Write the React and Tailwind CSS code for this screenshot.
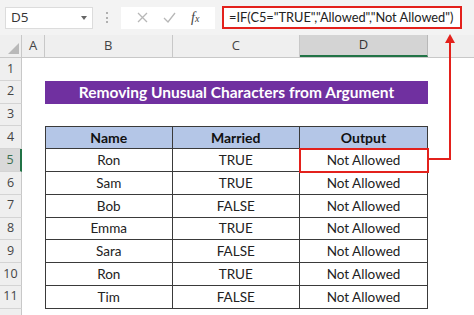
import React from 'react';

const rows = [
  ['Ron', 'TRUE'],
  ['Sam', 'TRUE'],
  ['Bob', 'FALSE'],
  ['Emma', 'TRUE'],
  ['Sara', 'FALSE'],
  ['Ron', 'TRUE'],
  ['Tim', 'FALSE'],
];

const cal = { fontFamily: 'Lato, "Open Sans", sans-serif' };

function RowHead({ n, active }) {
  return (
    <div
      className={`w-[22px] shrink-0 flex items-center justify-center text-[12.5px] border-b border-[#d4d4d4] ${
        active ? 'bg-[#d9d9d9] text-[#3a6e4f] border-r-2 border-r-[#217346]' : 'bg-[#efefef] text-[#444] border-r border-r-[#c8c8c8]'
      }`}
    >
      {n <= 11 ? n : ''}
    </div>
  );
}

function Cell({ children, className = '' }) {
  return (
    <div className={`flex items-center justify-center border-r border-b border-[#3a3a3a] ${className}`}>
      {children}
    </div>
  );
}

export default function App() {
  return (
    <div className="relative w-[474px] h-[315px] overflow-hidden bg-white" style={{ fontFamily: '"Open Sans", sans-serif' }}>
      {/* formula bar */}
      <div className="h-[35px] bg-[#f3f3f3] flex items-center pl-[5px]">
        <div className="w-[88px] h-[22px] bg-white border border-[#dcdcdc] flex items-center justify-between pl-[5px] pr-[5px] text-[13.5px] text-[#333]">
          <span>D5</span>
          <span className="w-0 h-0 border-l-[3.5px] border-r-[3.5px] border-t-[4px] border-l-transparent border-r-transparent border-t-[#666]" />
        </div>
        <div className="w-[28px] flex flex-col items-center gap-[2.5px]">
          <span className="w-[2px] h-[2px] bg-[#b0b0b0]" />
          <span className="w-[2px] h-[2px] bg-[#b0b0b0]" />
          <span className="w-[2px] h-[2px] bg-[#b0b0b0]" />
        </div>
        <div className="w-[94px] h-[22px] bg-white flex items-center justify-around px-[8px]">
          <svg width="11" height="11" viewBox="0 0 11 11"><path d="M1 1L10 10M10 1L1 10" stroke="#b7b7b7" strokeWidth="1.3" /></svg>
          <svg width="13" height="11" viewBox="0 0 13 11"><path d="M1 6L5 10L12 1" stroke="#b7b7b7" strokeWidth="1.3" fill="none" /></svg>
          <span className="text-[14px] italic text-[#444]" style={{ fontFamily: '"Liberation Serif", serif' }}>f<span className="text-[10px]">x</span></span>
        </div>
        <div className="ml-[7px] w-[240px] h-[23px] bg-white border-2 border-[#e3211c] flex items-center pl-[5px] text-[12.8px] text-[#222] whitespace-nowrap" style={cal}>
          =IF(C5="TRUE","Allowed","Not Allowed")
        </div>
      </div>

      {/* column headers */}
      <div className="h-[23px] flex bg-[#efefef] border-b border-[#c8c8c8] text-[13px] text-[#444]">
        <div className="w-[22px] shrink-0 border-r border-[#c8c8c8] flex items-end justify-end pr-[2px] pb-[3px]">
          <svg width="11" height="11" viewBox="0 0 11 11"><polygon points="11,0 11,11 0,11" fill="#b9b9b9" /></svg>
        </div>
        <div className="w-[23px] shrink-0 border-r border-[#c8c8c8] flex items-center justify-center">A</div>
        <div className="w-[127.5px] shrink-0 border-r border-[#c8c8c8] flex items-center justify-center">B</div>
        <div className="w-[127.5px] shrink-0 border-r border-[#c8c8c8] flex items-center justify-center">C</div>
        <div className="w-[128px] shrink-0 bg-[#d4d4d4] border-r border-[#b8b8b8] border-b-2 border-b-[#217346] flex items-center justify-center text-[#333]">D</div>
        <div className="flex-1" />
      </div>

      {/* rows */}
      {Array.from({ length: 12 }, (_, i) => {
        const n = i + 1;
        const tIdx = n - 5;
        return (
          <div key={n} className="h-[22.8px] flex">
            <RowHead n={n} active={n === 5} />
            <div className="w-[23px] shrink-0" />
            {n === 2 && (
              <div className="w-[383px] shrink-0 bg-[#7030a0] text-white font-bold text-[15.5px] flex items-center justify-center" style={cal}>
                Removing Unusual Characters from Argument
              </div>
            )}
            {n === 4 && (
              <div className="flex border-t border-[#3a3a3a] bg-[#b4c6e7] font-bold text-[14px] text-[#111]" style={cal}>
                <Cell className="w-[127.5px] border-l">Name</Cell>
                <Cell className="w-[127.5px]">Married</Cell>
                <Cell className="w-[128px]">Output</Cell>
              </div>
            )}
            {tIdx >= 0 && tIdx < 7 && (
              <div className="flex text-[13.5px] text-[#222]" style={cal}>
                <Cell className="w-[127.5px] border-l">{rows[tIdx][0]}</Cell>
                <Cell className="w-[127.5px]">{rows[tIdx][1]}</Cell>
                <Cell className="w-[128px]">Not Allowed</Cell>
              </div>
            )}
          </div>
        );
      })}

      {/* highlight on D5 */}
      <div className="absolute left-[299px] top-[148px] w-[130px] h-[25px] border-2 border-[#e3211c]" />
      <svg className="absolute left-0 top-0" width="474" height="315" viewBox="0 0 474 315">
        <polyline points="429,159 450,159 450,42" fill="none" stroke="#e3211c" strokeWidth="2" />
        <polygon points="445,43 455,43 450,34" fill="#e3211c" />
      </svg>
    </div>
  );
}
